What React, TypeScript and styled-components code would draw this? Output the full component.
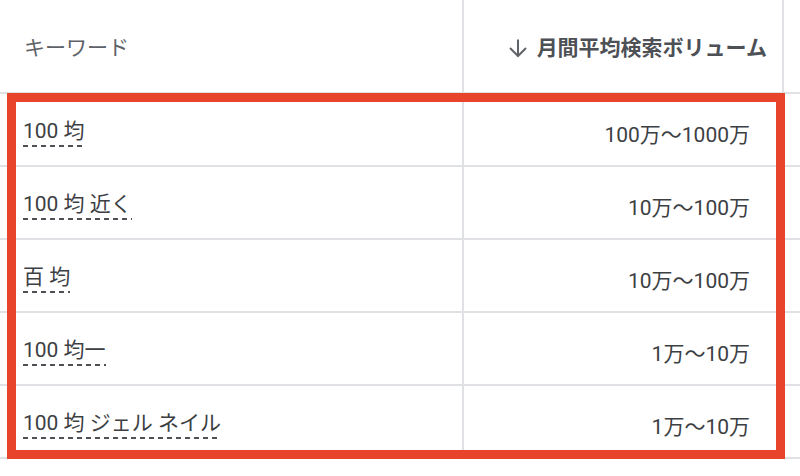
import React from 'react';
import styled, { createGlobalStyle } from 'styled-components';

interface KeywordRow {
  keyword: string;
  volume: string;
}

const rows: KeywordRow[] = [
  { keyword: '100 均', volume: '100万～1000万' },
  { keyword: '100 均 近く', volume: '10万～100万' },
  { keyword: '百 均', volume: '10万～100万' },
  { keyword: '100 均一', volume: '1万～10万' },
  { keyword: '100 均 ジェル ネイル', volume: '1万～10万' },
];

const GlobalStyle = createGlobalStyle`
  html, body {
    margin: 0;
    padding: 0;
    background: #fff;
  }

  body {
    font-family: Roboto, "Noto Sans CJK JP", sans-serif;
    color: #3c4043;
  }
`;

const ArrowDown = () => (
  <svg width="22" height="22" viewBox="0 0 22 22" fill="none" stroke="#5f6368" strokeWidth="2">
    <path d="M11 2.5v16" />
    <path d="M3 11l8 8 8-8" />
  </svg>
);

const App = () => (
  <>
    <GlobalStyle />
    <Table>
      <HeaderRow>
        <KeywordCell>
          <HeaderLabel>キーワード</HeaderLabel>
        </KeywordCell>
        <VolumeCell $header>
          <SortLabel>
            <ArrowDown />
            月間平均検索ボリューム
          </SortLabel>
        </VolumeCell>
        <SpareCell />
      </HeaderRow>
      <Body>
        {rows.map((row) => (
          <Row key={row.keyword}>
            <KeywordCell $body>
              <Keyword>{row.keyword}</Keyword>
            </KeywordCell>
            <VolumeCell $body>{row.volume}</VolumeCell>
            <SpareCell />
          </Row>
        ))}
      </Body>
    </Table>
  </>
);

const Table = styled.div`
  width: 800px;
  height: 476px;
  display: flex;
  flex-direction: column;
  overflow: hidden;
`;

const BaseRow = styled.div`
  display: flex;
  box-sizing: border-box;
  border-bottom: 2px solid #e0e1e5;
`;

const HeaderRow = styled(BaseRow)`
  height: 94px;
`;

const Body = styled.div`
  position: relative;
  display: flex;
  flex-direction: column;
  flex: 1;

  &::after {
    content: '';
    position: absolute;
    top: -1px;
    left: 7px;
    width: 778px;
    height: 366px;
    box-sizing: border-box;
    border: 9px solid #e8432b;
    pointer-events: none;
  }
`;

const Row = styled(BaseRow)`
  height: 73px;
`;

const Cell = styled.div<{ $body?: boolean }>`
  display: flex;
  align-items: center;
  box-sizing: border-box;
  font-size: 21px;
  padding-top: ${({ $body }) => ($body ? '7px' : '0')};
  border-right: 2px solid #e0e1e5;
`;

const KeywordCell = styled(Cell)`
  width: 464px;
  padding-left: 23px;
`;

const VolumeCell = styled(Cell)<{ $header?: boolean }>`
  width: 320px;
  justify-content: flex-end;
  padding-right: ${({ $header }) => ($header ? '15px' : '32px')};
  color: #3c4043;
`;

const SpareCell = styled.div`
  flex: 1;
`;

const HeaderLabel = styled.span`
  color: #5f6368;
  font-size: 21px;
  padding-left: 1px;
`;

const SortLabel = styled.span`
  display: flex;
  align-items: center;
  gap: 8px;
  font-size: 21px;
  font-weight: 700;
  color: #4d5055;

  & > svg {
    margin-top: 3px;
  }
`;

const Keyword = styled.span`
  display: inline-block;
  line-height: 1.2;
  padding-bottom: 3px;
  color: #3c4043;
  background-image: repeating-linear-gradient(to right, #4d5055 0 5px, transparent 5px 9px);
  background-size: 100% 2px;
  background-position: left bottom;
  background-repeat: no-repeat;
`;

export default App;
